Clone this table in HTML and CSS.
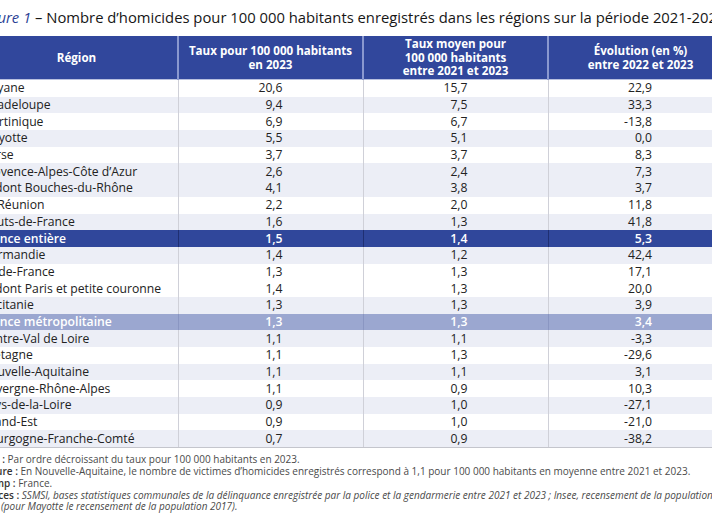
FILE: index.html
```html
<!DOCTYPE html>
<html lang="fr">
<head>
<meta charset="utf-8">
<title>Figure 1</title>
<link rel="stylesheet" href="styles.css">
</head>
<body>
<div class="page">
  <h1 class="title"><span class="fig">Figure 1</span> – Nombre d’homicides pour 100 000 habitants enregistrés dans les régions sur la période 2021-2023</h1>
  <table class="data">
    <colgroup>
      <col class="w-region">
      <col class="w-num">
      <col class="w-num">
      <col class="w-last">
    </colgroup>
    <thead>
      <tr>
        <th>Région</th>
        <th>Taux pour 100 000 habitants<br>en 2023</th>
        <th>Taux moyen pour<br>100 000 habitants<br>entre 2021 et 2023</th>
        <th>Évolution (en %)<br>entre 2022 et 2023</th>
      </tr>
    </thead>
    <tbody>
      <tr><td>Guyane</td><td>20,6</td><td>15,7</td><td>22,9</td></tr>
      <tr class="alt"><td>Guadeloupe</td><td>9,4</td><td>7,5</td><td>33,3</td></tr>
      <tr><td>Martinique</td><td>6,9</td><td>6,7</td><td>-13,8</td></tr>
      <tr class="alt"><td>Mayotte</td><td>5,5</td><td>5,1</td><td>0,0</td></tr>
      <tr><td>Corse</td><td>3,7</td><td>3,7</td><td>8,3</td></tr>
      <tr class="alt"><td>Provence-Alpes-Côte d’Azur</td><td>2,6</td><td>2,4</td><td>7,3</td></tr>
      <tr class="alt sub"><td>dont Bouches-du-Rhône</td><td>4,1</td><td>3,8</td><td>3,7</td></tr>
      <tr><td>La Réunion</td><td>2,2</td><td>2,0</td><td>11,8</td></tr>
      <tr class="alt"><td>Hauts-de-France</td><td>1,6</td><td>1,3</td><td>41,8</td></tr>
      <tr class="total"><td>France entière</td><td>1,5</td><td>1,4</td><td>5,3</td></tr>
      <tr class="alt"><td>Normandie</td><td>1,4</td><td>1,2</td><td>42,4</td></tr>
      <tr><td>Île-de-France</td><td>1,3</td><td>1,3</td><td>17,1</td></tr>
      <tr class="sub"><td>dont Paris et petite couronne</td><td>1,4</td><td>1,3</td><td>20,0</td></tr>
      <tr class="alt"><td>Occitanie</td><td>1,3</td><td>1,3</td><td>3,9</td></tr>
      <tr class="metro"><td>France métropolitaine</td><td>1,3</td><td>1,3</td><td>3,4</td></tr>
      <tr class="alt"><td>Centre-Val de Loire</td><td>1,1</td><td>1,1</td><td>-3,3</td></tr>
      <tr><td>Bretagne</td><td>1,1</td><td>1,3</td><td>-29,6</td></tr>
      <tr class="alt"><td>Nouvelle-Aquitaine</td><td>1,1</td><td>1,1</td><td>3,1</td></tr>
      <tr><td>Auvergne-Rhône-Alpes</td><td>1,1</td><td>0,9</td><td>10,3</td></tr>
      <tr class="alt"><td>Pays-de-la-Loire</td><td>0,9</td><td>1,0</td><td>-27,1</td></tr>
      <tr><td>Grand-Est</td><td>0,9</td><td>1,0</td><td>-21,0</td></tr>
      <tr class="alt"><td>Bourgogne-Franche-Comté</td><td>0,7</td><td>0,9</td><td>-38,2</td></tr>
    </tbody>
  </table>
  <div class="notes">
    <p><b>Note :</b> Par ordre décroissant du taux pour 100 000 habitants en 2023.</p>
    <p><b>Lecture :</b> En Nouvelle-Aquitaine, le nombre de victimes d’homicides enregistrés correspond à 1,1 pour 100 000 habitants en moyenne entre 2021 et 2023.</p>
    <p><b>Champ :</b> France.</p>
    <p class="src"><b>Sources :</b> <i>SSMSI, bases statistiques communales de la délinquance enregistrée par la police et la gendarmerie entre 2021 et 2023 ; Insee, recensement de la population 2023</i></p>
    <p class="src2"><i>(pour Mayotte le recensement de la population 2017).</i></p>
  </div>
</div>
</body>
</html>
```
FILE: styles.css
```css
html, body {
  margin: 0;
  padding: 0;
  background: #ffffff;
}
body {
  width: 712px;
  height: 527px;
  overflow: hidden;
  font-family: "Open Sans", "Noto Sans", sans-serif;
  color: #1e1e1e;
}
.page {
  margin-left: -24px;
  width: 756px;
  padding-top: 7px;
}
.title {
  margin: 0 0 9px 3px;
  font-size: 14.8px;
  line-height: 20px;
  font-weight: 500;
  white-space: nowrap;
  color: #161616;
}
.fig {
  font-style: italic;
  color: #2b3f95;
}
.data {
  border-collapse: collapse;
  table-layout: fixed;
  width: 756px;
  font-size: 12.2px;
}
.w-region { width: 202px; }
.w-num { width: 185px; }
.w-last { width: 184px; }
.data th {
  background: #31479c;
  color: #ffffff;
  font-weight: 700;
  font-size: 11.6px;
  line-height: 13.4px;
  height: 43px;
  padding: 0;
  text-align: center;
  vertical-align: middle;
  border-left: 2px solid #8a98cf;
  border-bottom: 1px solid #b8c0df;
}
.data th:first-child {
  border-left: none;
}
.data td {
  height: 16.7px;
  padding: 0 80px 0 0;
  line-height: 16px;
  text-align: right;
  vertical-align: middle;
  white-space: nowrap;
  border-left: 1px solid #cfd0d8;
  color: #222222;
}
.data td:first-child {
  text-align: left;
  padding: 0 0 0 5px;
  border-left: none;
}
.data tr.sub td:first-child {
  padding-left: 19px;
}
.data tr.alt td {
  background: #eceef6;
}
.data tr.total td {
  background: #30479b;
  color: #ffffff;
  font-weight: 600;
  border-left-color: #1f2f72;
}
.data tr.metro td {
  background: #9ba7d0;
  color: #ffffff;
  font-weight: 600;
  border-left-color: #8a96c2;
}
.data tbody tr:last-child td {
  border-bottom: 1px solid #c4c5cc;
}
.notes {
  margin-top: 6px;
  font-size: 10px;
  line-height: 11.8px;
  color: #4a4a4a;
  font-weight: 400;
}
.notes p {
  margin: 0;
  white-space: nowrap;
}
.notes b {
  font-weight: 600;
  color: #333333;
}
.notes .src2 {
  padding-left: 25px;
}
```
